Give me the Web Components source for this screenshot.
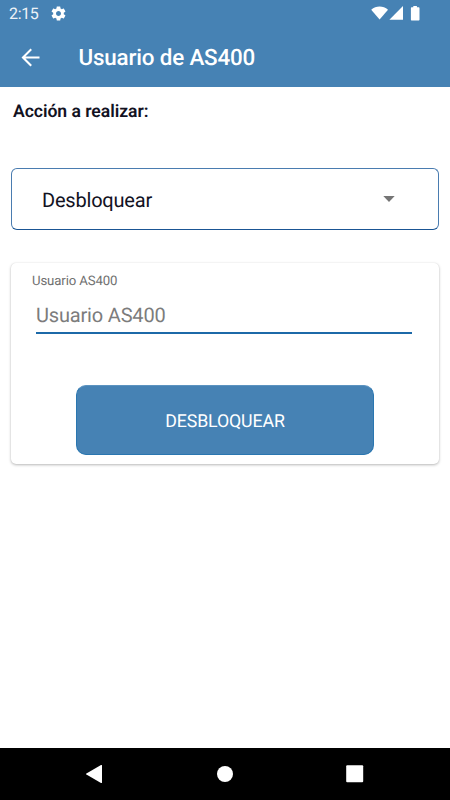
<!DOCTYPE html>
<html lang="es">
<head>
<meta charset="utf-8">
<meta name="viewport" content="width=device-width, initial-scale=1">
<title>Usuario de AS400</title>
<style>
    :root {
        --blue: #4682b4;
        --line: #1c69a8;
        --ink: #12121f;
    }

    body {
        margin: 0;
        font-family: Roboto, "Noto Sans", sans-serif;
        text-rendering: geometricPrecision;
        color: var(--ink);
        background: #fff;
    }
</style>
</head>
<body>
<app-screen>
    <status-bar slot="top" time="2:15"></status-bar>
    <app-toolbar slot="top">Usuario de AS400</app-toolbar>
    <section-label>Acción a realizar:</section-label>
    <action-select>Desbloquear</action-select>
    <user-card>
        <text-field label="Usuario AS400" placeholder="Usuario AS400"></text-field>
        <action-button>DESBLOQUEAR</action-button>
    </user-card>
    <nav-bar slot="bottom"></nav-bar>
</app-screen>

<script>
class AppScreen extends HTMLElement {
    constructor() {
        super();
        this.attachShadow({ mode: 'open' });
        this.shadowRoot.innerHTML = `
            <style>
                :host {
                    display: flex;
                    flex-direction: column;
                    width: 450px;
                    height: 800px;
                    overflow: hidden;
                }

                header {
                    height: 87px;
                    background: var(--blue);
                    color: #fff;
                }

                main {
                    flex: 1;
                    display: flex;
                    flex-direction: column;
                    padding: 13px 11px 0;
                }
            </style>
            <header><slot name="top"></slot></header>
            <main><slot></slot></main>
            <slot name="bottom"></slot>
        `;
    }
}
customElements.define('app-screen', AppScreen);

class StatusBar extends HTMLElement {
    constructor() {
        super();
        this.attachShadow({ mode: 'open' });
        this.shadowRoot.innerHTML = `
            <style>
                :host {
                    display: flex;
                    align-items: center;
                    box-sizing: border-box;
                    height: 27px;
                    padding: 0 30px 0 9px;
                    font-size: 16px;
                    line-height: 28px;
                }

                span { width: 41px; letter-spacing: -0.35px; opacity: .9; }
                svg { display: block; fill: #fff; }
                .signals { margin-left: auto; }
            </style>
            <span>${this.getAttribute('time')}</span>
            <svg width="17" height="17" viewBox="0 0 24 24"><path d="M19.43 12.98c.04-.32.07-.64.07-.98s-.03-.66-.07-.98l2.11-1.65c.19-.15.24-.42.12-.64l-2-3.46c-.12-.22-.39-.3-.61-.22l-2.49 1c-.52-.4-1.08-.73-1.69-.98l-.38-2.65C14.46 2.18 14.25 2 14 2h-4c-.25 0-.46.18-.49.42l-.38 2.65c-.61.25-1.17.59-1.69.98l-2.49-1c-.23-.09-.49 0-.61.22l-2 3.46c-.13.22-.07.49.12.64l2.11 1.65c-.04.32-.07.65-.07.98s.03.66.07.98l-2.11 1.65c-.19.15-.24.42-.12.64l2 3.46c.12.22.39.3.61.22l2.49-1c.52.4 1.08.73 1.69.98l.38 2.65c.03.24.24.42.49.42h4c.25 0 .46-.18.49-.42l.38-2.65c.61-.25 1.17-.59 1.69-.98l2.49 1c.23.09.49 0 .61-.22l2-3.46c.12-.22.07-.49-.12-.64l-2.11-1.65zM12 15.5c-1.93 0-3.5-1.57-3.5-3.5s1.57-3.5 3.5-3.5 3.5 1.57 3.5 3.5-1.57 3.5-3.5 3.5z"/></svg>
            <svg class="signals" width="49" height="15" viewBox="0 0 49 15">
                <path d="M.2 3.7C5-.5 12.2-.5 17 3.7L8.6 13.4Z"/>
                <path d="M18.4 13.8 32 0V13.8Z"/>
                <path d="M42.3 0h3.6v1.2h1.6c.6 0 1 .4 1 1v11.4c0 .6-.4 1-1 1h-6.6c-.6 0-1-.4-1-1V2.2c0-.6.4-1 1-1h1.4Z"/>
            </svg>
        `;
    }
}
customElements.define('status-bar', StatusBar);

class AppToolbar extends HTMLElement {
    constructor() {
        super();
        this.attachShadow({ mode: 'open' });
        this.shadowRoot.innerHTML = `
            <style>
                :host {
                    display: flex;
                    align-items: center;
                    height: 61px;
                    padding-left: 17px;
                    font-size: 22.4px;
                    font-weight: 500;
                    letter-spacing: -0.17px;
                }

                svg { display: block; fill: #fff; margin-right: 34.5px; }
            </style>
            <svg width="27" height="27" viewBox="0 0 24 24"><path d="M20 11.15H7.5l5.8-5.85L12 4l-8 8 8 8 1.3-1.3-5.8-5.85H20z"/></svg>
            <slot></slot>
        `;
    }
}
customElements.define('app-toolbar', AppToolbar);

class SectionLabel extends HTMLElement {
    constructor() {
        super();
        this.attachShadow({ mode: 'open' });
        this.shadowRoot.innerHTML = `
            <style>
                :host {
                    display: block;
                    height: 68px;
                    padding-left: 2px;
                    font-size: 17.6px;
                    font-weight: 650;
                    line-height: 24px;
                    letter-spacing: -0.05px;
                }
            </style>
            <slot></slot>
        `;
    }
}
customElements.define('section-label', SectionLabel);

class ActionSelect extends HTMLElement {
    constructor() {
        super();
        this.attachShadow({ mode: 'open' });
        this.shadowRoot.innerHTML = `
            <style>
                :host {
                    display: flex;
                    align-items: center;
                    justify-content: space-between;
                    box-sizing: border-box;
                    height: 62px;
                    padding: 0 43px 0 30px;
                    border: 1px solid #4a7cb0;
                    border-bottom-color: #1a5594;
                    border-radius: 6px;
                    font-size: 20px;
                    line-height: 24px;
                    letter-spacing: -0.2px;
                }

                span { padding-top: 2px; }
                svg { display: block; fill: #757575; }
            </style>
            <span><slot></slot></span>
            <svg width="12" height="6" viewBox="0 0 12 6"><path d="M.3 0h11.4L6 6Z"/></svg>
        `;
    }
}
customElements.define('action-select', ActionSelect);

class UserCard extends HTMLElement {
    constructor() {
        super();
        this.attachShadow({ mode: 'open' });
        this.shadowRoot.innerHTML = `
            <style>
                :host {
                    display: flex;
                    flex-direction: column;
                    box-sizing: border-box;
                    height: 201px;
                    margin-top: 33px;
                    padding: 9px 27px 9px 21px;
                    border-radius: 5px;
                    background: #fff;
                    box-shadow: 0 1px 3px rgba(0, 0, 0, .28), 0 0 1px rgba(0, 0, 0, .1);
                }
            </style>
            <slot></slot>
        `;
    }
}
customElements.define('user-card', UserCard);

class TextField extends HTMLElement {
    constructor() {
        super();
        this.attachShadow({ mode: 'open' });
        this.shadowRoot.innerHTML = `
            <style>
                :host { display: block; }

                label {
                    display: block;
                    font-size: 13.2px;
                    line-height: 20px;
                    letter-spacing: -0.12px;
                    color: #707070;
                }

                .input {
                    box-sizing: border-box;
                    height: 42px;
                    margin-left: 4px;
                    padding-top: 12px;
                    border-bottom: 2px solid var(--line);
                    font-size: 20px;
                    line-height: 23px;
                    letter-spacing: -0.18px;
                    color: #7c7c7c;
                }
            </style>
            <label>${this.getAttribute('label')}</label>
            <div class="input">${this.getAttribute('placeholder')}</div>
        `;
    }
}
customElements.define('text-field', TextField);

class ActionButton extends HTMLElement {
    constructor() {
        super();
        this.attachShadow({ mode: 'open' });
        this.shadowRoot.innerHTML = `
            <style>
                :host {
                    display: flex;
                    align-items: center;
                    justify-content: center;
                    box-sizing: border-box;
                    width: 298px;
                    height: 70px;
                    margin: auto 0 0 44px;
                    padding-top: 2px;
                    border: 1px solid #2a76b0;
                    border-top-color: #5c93c0;
                    border-radius: 10px;
                    background: var(--blue);
                    font-size: 17.8px;
                    letter-spacing: -0.15px;
                    color: #fff;
                }
            </style>
            <slot></slot>
        `;
    }
}
customElements.define('action-button', ActionButton);

class NavBar extends HTMLElement {
    constructor() {
        super();
        this.attachShadow({ mode: 'open' });
        this.shadowRoot.innerHTML = `
            <style>
                :host {
                    display: flex;
                    align-items: center;
                    justify-content: space-between;
                    box-sizing: border-box;
                    height: 52px;
                    padding: 0 86px 0 85px;
                    background: #000;
                }

                svg { display: block; fill: #fff; }
            </style>
            <svg width="18" height="18" viewBox="0 0 18 18"><path d="M16 0c.6-.3 1 0 1 .6v16.8c0 .6-.4.9-1 .6L1.4 9.6c-.5-.3-.5-.9 0-1.2Z"/></svg>
            <svg width="18" height="18" viewBox="0 0 18 18"><circle cx="9" cy="9" r="8"/></svg>
            <svg width="18" height="18" viewBox="0 0 18 18"><rect x=".2" y=".3" width="17" height="17" rx="1"/></svg>
        `;
    }
}
customElements.define('nav-bar', NavBar);
</script>
</body>
</html>
